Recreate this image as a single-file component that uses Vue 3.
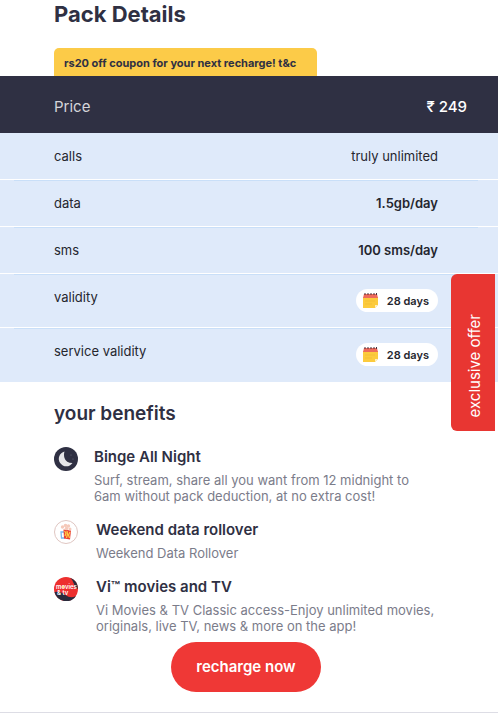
<script setup>
const rows = [
  { label: 'calls', value: 'truly unlimited' },
  { label: 'data', value: '1.5gb/day', bold: true },
  { label: 'sms', value: '100 sms/day', bold: true },
  { label: 'validity', value: '28 days', pill: true },
  { label: 'service validity', value: '28 days', pill: true }
]
const benefits = [
  { icon: 'moon', title: 'Binge All Night', text: 'Surf, stream, share all you want from 12 midnight to 6am without pack deduction, at no extra cost!' },
  { icon: 'rollover', title: 'Weekend data rollover', text: 'Weekend Data Rollover' },
  { icon: 'movies', title: 'Vi™ movies and TV', text: 'Vi Movies & TV Classic access-Enjoy unlimited movies, originals, live TV, news & more on the app!' }
]
</script>

<template>
  <main class="page">
    <h1>Pack Details</h1>
    <p class="coupon">rs20 off coupon for your next recharge! t&amp;c</p>
    <table class="pack">
      <thead>
        <tr>
          <th scope="col">Price</th>
          <th scope="col" class="amount">₹ 249</th>
        </tr>
      </thead>
      <tbody>
        <tr v-for="row in rows" :key="row.label" :class="{ tall: row.pill }">
          <th scope="row">{{ row.label }}</th>
          <td :class="{ bold: row.bold }">
            <span v-if="row.pill" class="pill">
              <svg width="15" height="15" viewBox="0 0 15 15" aria-hidden="true">
                <path d="M0 4h15v8l-3 3H0z" fill="#fccb3d" />
                <path d="M15 12l-3 3v-3z" fill="#fff0bd" />
                <path d="M1 1h13l1 4H0z" fill="#ed6b5c" />
                <path d="M2 0v2M5 0v2M8 0v2M11 0v2M13.500 0v2" stroke="#4a3038" />
                <path d="M2 8h10M2 11h7" stroke="#f5bf35" />
              </svg>
              {{ row.value }}
            </span>
            <template v-else>{{ row.value }}</template>
          </td>
        </tr>
      </tbody>
    </table>
    <section class="benefits">
      <h2>your benefits</h2>
      <ul>
        <li v-for="b in benefits" :key="b.icon" :class="b.icon">
          <svg v-if="b.icon === 'moon'" class="icon" viewBox="0 0 24 24" aria-hidden="true">
            <circle cx="12" cy="12" r="12" fill="#2f3043" />
            <path d="M10.500 4.500A7.500 7.500 0 1 0 18.500 16Q12 16 10.500 11Q9.500 7.500 10.500 4.500z" fill="#e5e5e8" />
            <circle cx="17" cy="8" r=".5" fill="#777889" />
            <circle cx="19" cy="12" r=".5" fill="#777889" />
          </svg>
          <svg v-else-if="b.icon === 'rollover'" class="icon" viewBox="0 0 24 24" aria-hidden="true">
            <circle cx="12" cy="12" r="11.500" fill="#fff" stroke="#dfc6c2" />
            <path d="M10 12H7l.5 6H11" fill="none" stroke="#79b7ed" stroke-width="1.300" />
            <path d="M9.500 9.500l7.500 1-1 9-6-1z" fill="#e93e35" />
            <path d="M10.500 11l1.500 2-1 3M13 11l.5 3-1 4M16 12l-1.500 3 1 3" fill="none" stroke="#ffd044" stroke-width="1.200" />
            <g fill="#f5c9ba">
              <circle cx="8.500" cy="7" r="1.700" />
              <circle cx="11.500" cy="5.500" r="1.800" />
              <circle cx="14.500" cy="6" r="1.700" />
              <circle cx="12.500" cy="8.500" r="1.800" />
              <circle cx="16" cy="9" r="1.500" />
            </g>
          </svg>
          <svg v-else class="icon" viewBox="0 0 24 24" aria-hidden="true">
            <circle cx="12" cy="12" r="12" fill="#ed302f" />
            <path d="M.5 15q6-1 11 3t10.500 1A12 12 0 0 1 .5 15z" fill="#292b3c" />
            <path d="M16 .8a12 12 0 0 1 8 11.200q-3-1-4-5t-4-6.200z" fill="#292b3c" />
            <circle cx="9" cy="10" r="1.300" fill="#ffc83d" />
            <text x="2" y="12" class="logo-text">movies</text>
            <text x="3" y="18" class="logo-text">&amp; tv</text>
          </svg>
          <div>
            <h3>{{ b.title }}</h3>
            <p>{{ b.text }}</p>
          </div>
        </li>
      </ul>
    </section>
    <div class="actions">
      <button type="button" class="recharge">recharge now</button>
    </div>
    <button type="button" class="offer"><span>exclusive offer</span></button>
  </main>
</template>

<style>
body {
  background: #fff;
}
</style>

<style scoped>
.page {
  font-family: Inter, "Liberation Sans", sans-serif;
  color: #2f3043;
}
h1, h2, h3, p, ul {
  margin: 0;
  padding: 0;
}
h1 {
  padding-left: 54px;
  font-size: 22px;
  line-height: 28px;
  font-weight: 700;
}
.coupon {
  width: fit-content;
  box-sizing: border-box;
  margin: 20px 0 0 54px;
  padding: 2px 21px 0 10px;
  border-radius: 5px 5px 0 0;
  background: #fccb48;
  font-size: 11px;
  line-height: 26px;
  font-weight: 700;
}
.pack {
  width: 100%;
  border-collapse: separate;
  border-spacing: 0;
  font-size: 13px;
  line-height: 20px;
}
.pack thead th {
  height: 57px;
  padding: 4px 0 0 54px;
  box-sizing: border-box;
  background: #2f3043;
  color: #d5d5da;
  font-size: 15px;
  font-weight: 400;
  text-align: left;
}
.pack thead .amount {
  padding: 4px 31px 0 0;
  color: #fff;
  font-weight: 500;
  text-align: right;
}
.pack tbody th,
.pack tbody td {
  height: 47px;
  box-sizing: border-box;
  padding: 13px 0 0 54px;
  vertical-align: top;
  background: #dfeafa;
  border-bottom: 1px solid #fff;
  color: #25262e;
  font-weight: 400;
  text-align: left;
}
.pack tbody td {
  padding: 13px 60px 0 0;
  text-align: right;
}
.pack tbody .bold {
  font-weight: 600;
}
.pack tbody .tall th,
.pack tbody .tall td {
  height: 54px;
}
.pack tbody .tall td {
  padding-top: 15px;
}
.pack tbody tr + tr th {
  background: linear-gradient(#c9dff8, #c9dff8) 14px 0 / 100% 1px no-repeat #dfeafa;
}
.pack tbody tr + tr td {
  background: linear-gradient(#c9dff8, #c9dff8) 0 0 / calc(100% - 20px) 1px no-repeat #dfeafa;
}
.pack tbody tr:last-child th,
.pack tbody tr:last-child td {
  border-bottom: 0;
}
.pill {
  display: inline-flex;
  align-items: center;
  vertical-align: top;
  gap: 9px;
  height: 23px;
  padding: 0 9px 0 7px;
  border-radius: 12px;
  background: #fff;
  font-size: 11px;
  font-weight: 600;
}
.benefits {
  padding: 20px 54px 0;
}
h2 {
  font-size: 19px;
  line-height: 24px;
  font-weight: 600;
}
ul {
  list-style: none;
  margin-top: 21px;
  display: grid;
  gap: 16px;
}
li {
  display: flex;
  align-items: flex-start;
  gap: 18px;
}
li.moon {
  gap: 16px;
}
.icon {
  flex: none;
  width: 24px;
  height: 24px;
}
.logo-text {
  fill: #fff;
  font-size: 6px;
  font-weight: 600;
}
h3 {
  font-size: 15px;
  line-height: 20px;
  font-weight: 600;
}
li p {
  max-width: 342px;
  margin-top: 5px;
  color: #7b7c8a;
  font-size: 13px;
  line-height: 16px;
}
.actions {
  display: flex;
  justify-content: center;
  padding: 8px 6px 20px 0;
  border-bottom: 1px solid #dddde5;
}
.recharge {
  min-width: 150px;
  height: 50px;
  padding: 0 24px;
  border: 0;
  border-radius: 25px;
  background: #ef3836;
  color: #fff;
  font: 600 15px/20px Inter, sans-serif;
}
.offer {
  position: fixed;
  top: 274px;
  right: 3px;
  display: flex;
  align-items: center;
  justify-content: center;
  width: 44px;
  height: 157px;
  padding: 26px 0 0 4px;
  box-sizing: border-box;
  border: 0;
  border-radius: 6px 0 0 6px;
  background: #e83632;
  color: #fff;
  font: 400 15px/20px Inter, sans-serif;
}
.offer span {
  writing-mode: vertical-rl;
  transform: rotate(180deg);
}
</style>
